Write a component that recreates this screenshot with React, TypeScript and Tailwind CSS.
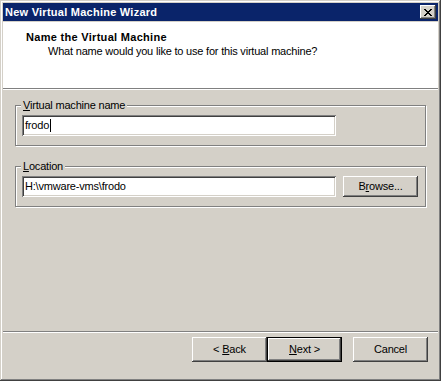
const raised =
  "shadow-[inset_-1px_-1px_0_#404040,inset_1px_1px_0_#ffffff,inset_-2px_-2px_0_#808080,inset_2px_2px_0_#d4d0c8]";
const sunken =
  "shadow-[inset_1px_1px_0_#808080,inset_-1px_-1px_0_#ffffff,inset_2px_2px_0_#404040,inset_-2px_-2px_0_#d4d0c8]";

function Button({
  children,
  isDefault = false,
  className = "",
}: {
  children: React.ReactNode;
  isDefault?: boolean;
  className?: string;
}) {
  if (isDefault) {
    return (
      <div className={`border border-black bg-[#d4d0c8] ${className}`}>
        <div className={`flex h-full w-full items-center justify-center ${raised}`}>{children}</div>
      </div>
    );
  }
  return (
    <div className={`flex items-center justify-center bg-[#d4d0c8] ${raised} ${className}`}>
      {children}
    </div>
  );
}

function GroupBox({
  label,
  children,
}: {
  label: React.ReactNode;
  children: React.ReactNode;
}) {
  return (
    <div className="relative ml-[12px] w-[411px] border border-[#808080] px-[6px] pt-[9px] pb-[9px] shadow-[inset_1px_1px_0_#ffffff,1px_1px_0_#ffffff]">
      <span className="absolute -top-[7px] left-[5px] bg-[#d4d0c8] px-[2px] leading-[13px]">
        {label}
      </span>
      {children}
    </div>
  );
}

export default function App() {
  return (
    <div className="flex h-[381px] w-[441px] flex-col bg-[#d4d0c8] p-[3px] font-['Liberation_Sans',Arial,sans-serif] text-[11px] leading-[13px] tracking-[-0.2px] text-black shadow-[inset_-1px_-1px_0_#404040,inset_1px_1px_0_#d4d0c8,inset_-2px_-2px_0_#808080,inset_2px_2px_0_#ffffff]">
      <div className="flex h-[18px] items-center justify-between bg-[#0a246a] pl-[2px] pr-[2px]">
        <span className="font-bold tracking-[0.25px] text-white">New Virtual Machine Wizard</span>
        <Button className="h-[14px] w-[16px]">
          <svg width="8" height="7" viewBox="0 0 8 7" shapeRendering="crispEdges">
            <path
              fill="#000"
              d="M0 0h2v1h-2zM6 0h2v1h-2zM1 1h2v1h-2zM5 1h2v1h-2zM2 2h4v1h-4zM3 3h2v1h-2zM2 4h4v1h-4zM1 5h2v1h-2zM5 5h2v1h-2zM0 6h2v1h-2zM6 6h2v1h-2z"
            />
          </svg>
        </Button>
      </div>

      <div className="mt-[1px] h-[66px] bg-white pl-[23px] pt-[9px]">
        <div className="font-bold tracking-[0.3px]">Name the Virtual Machine</div>
        <div className="ml-[22px] mt-[1px]">What name would you like to use for this virtual machine?</div>
      </div>
      <div className="h-[2px] border-t border-b border-t-[#808080] border-b-white" />

      <div className="flex flex-1 flex-col pt-[15px]">
        <GroupBox
          label={
            <>
              <u>V</u>irtual machine name
            </>
          }
        >
          <div className={`flex h-[21px] w-[314px] items-center bg-white pl-[3px] ${sunken}`}>
            <span>frodo</span>
            <span className="ml-[1px] h-[13px] w-px bg-black" />
          </div>
        </GroupBox>

        <div className="mt-[20px]">
          <GroupBox
            label={
              <>
                <u>L</u>ocation
              </>
            }
          >
            <div className="flex items-center gap-[7px]">
              <div className={`flex h-[21px] w-[314px] items-center bg-white pl-[3px] ${sunken}`}>
                {"H:\\vmware-vms\\frodo"}
              </div>
              <Button className="h-[21px] w-[75px]">
                <span>
                  B<u>r</u>owse...
                </span>
              </Button>
            </div>
          </GroupBox>
        </div>
      </div>

      <div className="h-[2px] border-t border-b border-t-[#808080] border-b-white" />
      <div className="flex h-[45px] items-start justify-end pr-[10px] pt-[4px]">
        <Button className="h-[25px] w-[75px]">
          <span className="whitespace-pre">
            {"< "}
            <u>B</u>ack
          </span>
        </Button>
        <Button isDefault className="h-[25px] w-[75px]">
          <span className="whitespace-pre">
            <u>N</u>
            {"ext >"}
          </span>
        </Button>
        <Button className="ml-[11px] h-[25px] w-[75px]">Cancel</Button>
      </div>
    </div>
  );
}
